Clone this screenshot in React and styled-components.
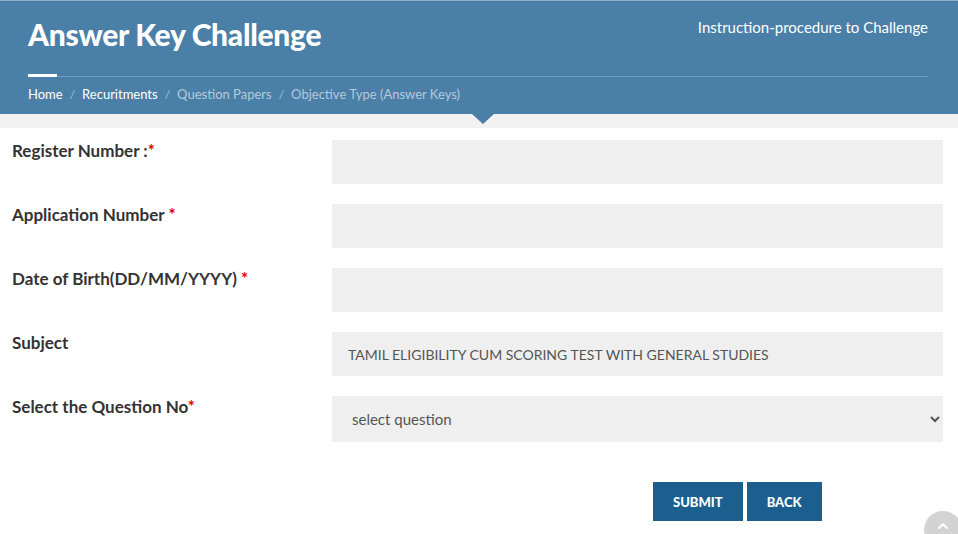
import React from "react";
import styled, { createGlobalStyle } from "styled-components";
import { ChevronUp } from "lucide-react";

const GlobalStyle = createGlobalStyle`
  body {
    margin: 0;
    background: #fff;
    font-family: Lato, "Open Sans", sans-serif;
    overflow: hidden;
  }
  * {
    box-sizing: border-box;
  }
`;

const Header = styled.div`
  position: relative;
  background: #4a7fa8;
  border-top: 1px solid #8fb0c9;
  height: 114px;
  padding: 0 30px 0 28px;
  color: #fff;

  &::after {
    content: "";
    position: absolute;
    left: 472px;
    bottom: -10px;
    border-left: 11px solid transparent;
    border-right: 11px solid transparent;
    border-top: 10px solid #4a7fa8;
  }
`;

const TopRow = styled.div`
  display: flex;
  justify-content: space-between;
  align-items: flex-start;
  height: 73px;
`;

const Title = styled.h1`
  margin: 15px 0 0;
  font-size: 30px;
  font-weight: 900;
  letter-spacing: -0.3px;
`;

const InstructionLink = styled.a`
  margin-top: 17px;
  font-size: 15px;
  color: #fff;
  text-decoration: none;
`;

const Divider = styled.div`
  height: 3px;
  border-bottom: 1px solid rgba(255, 255, 255, 0.22);
  margin-bottom: 9px;
`;

const Accent = styled.span`
  display: block;
  width: 29px;
  height: 3px;
  background: #fff;
`;

const Breadcrumb = styled.nav`
  display: flex;
  align-items: center;
  gap: 7px;
  font-size: 13px;
`;

const Crumb = styled.a`
  color: ${(p) => (p.$active ? "#fff" : "#b4c9da")};
  text-decoration: none;
`;

const Sep = styled.span`
  color: #a7bfd2;
  font-size: 12px;
`;

const Band = styled.div`
  height: 14px;
  background: #f2f2f2;
`;

const Form = styled.form`
  display: grid;
  grid-template-columns: 320px 1fr;
  row-gap: 20px;
  padding: 12px 15px 0 12px;
`;

const Label = styled.label`
  font-size: 17px;
  font-weight: 700;
  color: #333;
`;

const Star = styled.span`
  color: #e00000;
`;

const Field = styled.div`
  height: 44px;
  background: #efefef;
  display: flex;
  align-items: center;
  padding: 0 16px;
  font-size: 14px;
  color: #555;
`;

const Input = styled.input`
  height: 44px;
  width: 100%;
  border: none;
  background: #efefef;
  padding: 0 16px;
  font-family: inherit;
  font-size: 15px;
  outline: none;
`;

const Select = styled.select`
  height: 46px;
  width: 100%;
  border: none;
  background: #efefef;
  padding: 0 12px 0 16px;
  font-family: inherit;
  font-size: 15px;
  color: #555;
  outline: none;
`;

const Actions = styled.div`
  grid-column: 2;
  display: flex;
  gap: 4px;
  padding-left: 321px;
  margin-top: 20px;
`;

const Button = styled.button`
  height: 39px;
  padding: 0 20px;
  border: none;
  background: #1b5f8f;
  color: #fff;
  font-family: Lato, sans-serif;
  font-size: 13px;
  font-weight: 900;
  cursor: pointer;
`;

const ScrollTop = styled.button`
  position: fixed;
  left: 924px;
  top: 511px;
  width: 38px;
  height: 38px;
  border-radius: 50%;
  border: none;
  background: #d3d3d3;
  color: #fff;
  display: flex;
  justify-content: center;
  padding: 7px 0 0;
`;

const rows = [
  { label: "Register Number :", star: "*" },
  { label: "Application Number ", star: "*" },
  { label: "Date of Birth(DD/MM/YYYY) ", star: "*" },
];

export default function App() {
  return (
    <>
      <GlobalStyle />
      <Header>
        <TopRow>
          <Title>Answer Key Challenge</Title>
          <InstructionLink href="#">Instruction-procedure to Challenge</InstructionLink>
        </TopRow>
        <Divider>
          <Accent />
        </Divider>
        <Breadcrumb>
          <Crumb $active href="#">Home</Crumb>
          <Sep>/</Sep>
          <Crumb $active href="#">Recuritments</Crumb>
          <Sep>/</Sep>
          <Crumb href="#">Question Papers</Crumb>
          <Sep>/</Sep>
          <Crumb href="#">Objective Type (Answer Keys)</Crumb>
        </Breadcrumb>
      </Header>
      <Band />
      <Form onSubmit={(e) => e.preventDefault()}>
        {rows.map((r) => (
          <React.Fragment key={r.label}>
            <Label>
              {r.label}
              <Star>{r.star}</Star>
            </Label>
            <Input type="text" />
          </React.Fragment>
        ))}
        <Label>Subject</Label>
        <Field>TAMIL ELIGIBILITY CUM SCORING TEST WITH GENERAL STUDIES</Field>
        <Label>
          Select the Question No<Star>*</Star>
        </Label>
        <Select defaultValue="">
          <option value="">select question</option>
        </Select>
        <Actions>
          <Button type="submit">SUBMIT</Button>
          <Button type="button">BACK</Button>
        </Actions>
      </Form>
      <ScrollTop type="button">
        <ChevronUp size={16} strokeWidth={3} />
      </ScrollTop>
    </>
  );
}
